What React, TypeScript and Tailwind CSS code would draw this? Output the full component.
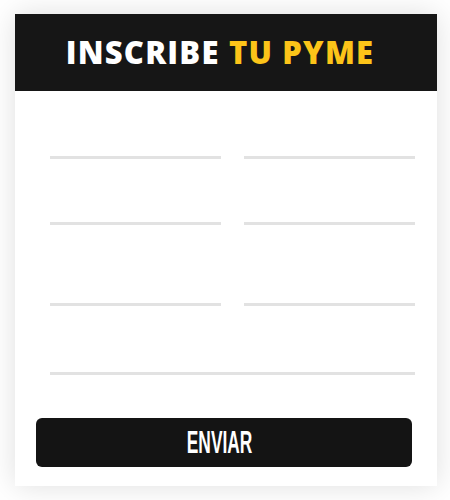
export default function App() {
  const line = "h-[3px] bg-[#e2e2e2]";
  return (
    <div className="w-[450px] h-[500px] bg-white pt-[14px] pl-[15px]">
      <div className="w-[422px] h-[472px] bg-white shadow-[0_0_28px_rgba(0,0,0,0.13)] flex flex-col">
        <div className="h-[77px] bg-[#161616] flex items-center justify-center pr-[12px]">
          <h1 className="font-['Open_Sans',sans-serif] font-extrabold text-[31px] tracking-[1.2px] leading-none">
            <span className="text-white">INSCRIBE </span>
            <span className="text-[#fcc419]">TU PYME</span>
          </h1>
        </div>
        <form className="flex flex-col pl-[35px] pr-[22px]">
          <div className="grid grid-cols-2 gap-x-[23px] mt-[65px]">
            <div className={line} />
            <div className={line} />
          </div>
          <div className="grid grid-cols-2 gap-x-[23px] mt-[63px]">
            <div className={line} />
            <div className={line} />
          </div>
          <div className="grid grid-cols-2 gap-x-[23px] mt-[78px]">
            <div className={line} />
            <div className={line} />
          </div>
          <div className={`${line} mt-[66px]`} />
        </form>
        <div className="pl-[21px] pr-[25px] mt-[43px]">
          <button className="w-full h-[49px] rounded-[6px] bg-[#141414] flex items-center justify-center pr-[8px]">
            <span className="inline-block font-['Liberation_Sans',sans-serif] font-bold text-[31px] leading-none text-white scale-x-[0.56]">
              ENVIAR
            </span>
          </button>
        </div>
      </div>
    </div>
  );
}
